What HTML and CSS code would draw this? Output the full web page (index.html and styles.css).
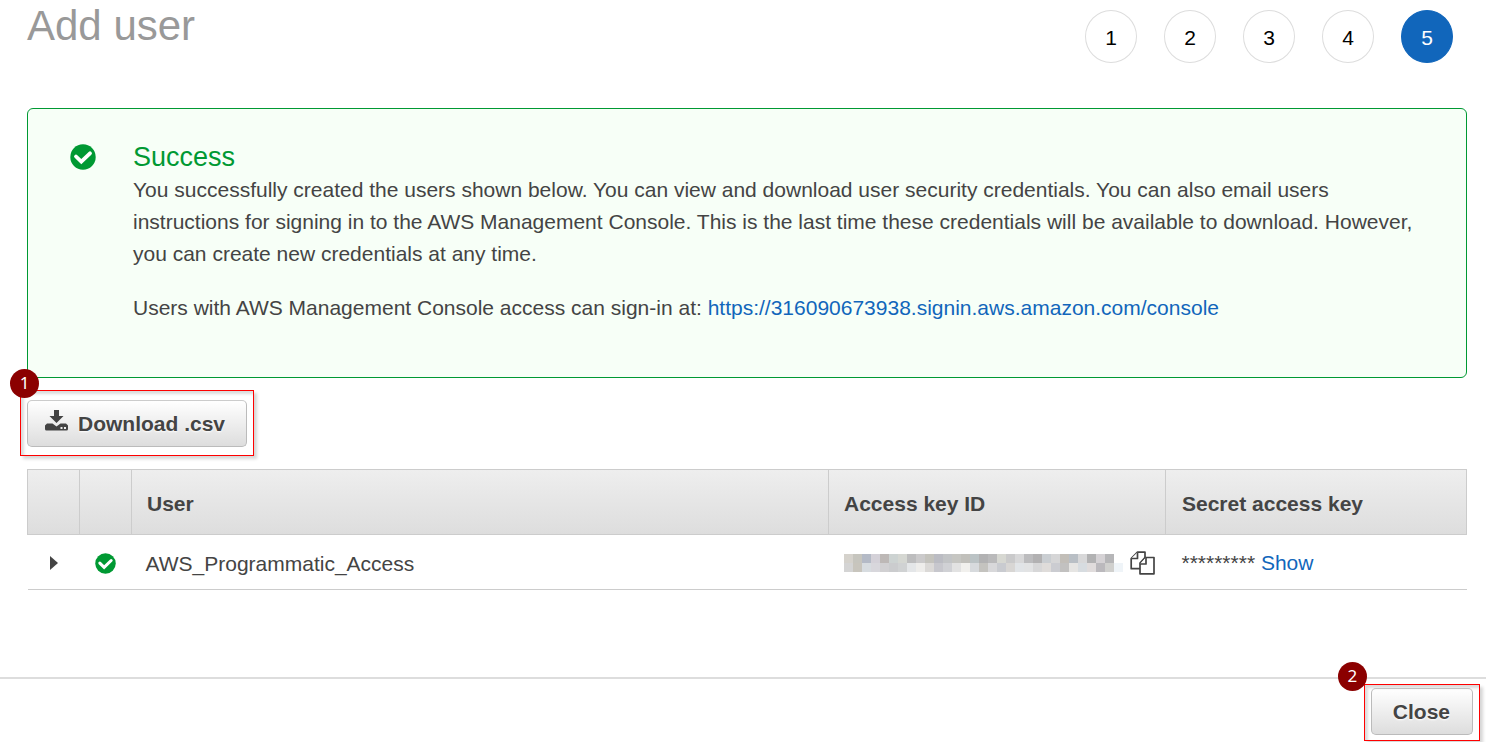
FILE: index.html
```html
<!DOCTYPE html>
<html lang="en">
<head>
<meta charset="utf-8">
<title>Add user</title>
<link rel="stylesheet" href="styles.css">
</head>
<body>
<svg class="defs" aria-hidden="true">
  <symbol id="check" viewBox="0 0 26 26">
    <circle cx="13" cy="13" r="12.7" fill="#093"/>
    <path d="M6 12.500l5.300 5.200 8.700-8.400" fill="none" stroke="#fff" stroke-width="3.800" stroke-linecap="round"/>
  </symbol>
</svg>
<header class="header">
  <h1 class="title">Add user</h1>
  <ol class="steps">
    <li class="step">1</li>
    <li class="step">2</li>
    <li class="step">3</li>
    <li class="step">4</li>
    <li class="step step-current" aria-current="step">5</li>
  </ol>
</header>
<main class="main">
  <section class="alert">
    <svg class="alert-icon"><use href="#check"/></svg>
    <div class="alert-body">
      <h2 class="alert-title">Success</h2>
      <p class="alert-text">You successfully created the users shown below. You can view and download user security credentials. You can also email users instructions for signing in to the AWS Management Console. This is the last time these credentials will be available to download. However, you can create new credentials at any time.</p>
      <p class="alert-text">Users with AWS Management Console access can sign-in at: <a class="link" href="#console">https://316090673938.signin.aws.amazon.com/console</a></p>
    </div>
  </section>
  <div class="callout callout-download">
    <button class="button" type="button">
      <svg class="download-icon" viewBox="0 0 23 21" aria-hidden="true">
        <path d="M9 0h5v6h4.500L11.500 13 4.500 6H9z" fill="#444"/>
        <path d="M2 13.500h5.500l4 3 4-3H21l2 2v3.500q0 1.500-1.500 1.500h-20Q0 20.500 0 19v-3.500z" fill="#444"/>
        <path d="M15.500 17h2v2h-2zM19 17h2v2h-2z" fill="#eee"/>
      </svg>
      Download .csv
    </button>
    <span class="callout-box"></span>
    <span class="callout-number">1</span>
  </div>
  <table class="users">
    <colgroup><col class="col-icon"><col class="col-icon"><col><col class="col-key"><col class="col-secret"></colgroup>
    <thead>
      <tr><th></th><th></th><th>User</th><th>Access key ID</th><th>Secret access key</th></tr>
    </thead>
    <tbody>
      <tr>
        <td class="icon-cell"><button class="icon-button" type="button" aria-label="Expand"><svg class="arrow" viewBox="0 0 8 14"><path d="M0 0l8 7-8 7z" fill="#444"/></svg></button></td>
        <td class="icon-cell"><svg class="row-check"><use href="#check"/></svg></td>
        <td class="name-cell">AWS_Programmatic_Access</td>
        <td>
          <div class="key">
            <svg class="mosaic" viewBox="0 0 279 18" shape-rendering="crispEdges" role="img" aria-label="Hidden key"></svg>
            <button class="icon-button" type="button" aria-label="Copy">
              <svg class="copy-icon" viewBox="0 0 25 24"><g fill="#fff" stroke="#444" stroke-width="1.700" stroke-linejoin="round"><path d="M7.500 1.200H15v16.500H1.200V7.500z"/><path d="M7.500 1.200v6.300H1.200"/><path d="M15 6.500h9v16.300H10V12z"/><path d="M16 6.500v6.500h-6"/></g></svg>
            </button>
          </div>
        </td>
        <td>********* <a class="link" href="#show">Show</a></td>
      </tr>
    </tbody>
  </table>
</main>
<footer class="footer">
  <div class="callout callout-close">
    <button class="button" type="button">Close</button>
    <span class="callout-box"></span>
    <span class="callout-number">2</span>
  </div>
</footer>
<script src="mosaic.js"></script>
</body>
</html>
```
FILE: mosaic.js
```js
const rows = [
  "d5d2cc c6c5be b4bac6 d4d1d8 bdb8b6 cdd3d2 d5d7d2 bdbdbe cbcacb c4c3bd bbbcc3 c2c4c6 c6c6c2 c1c0bb bbc3c5 b2b2b3 bababb d7d8d2 cacacb d8d8d9 bcbcbe b2b1b2 caced2 d6d6d7 c2beb8 b9bfc5 d8d8d9 b2b2b3 d5d2d5 b6b6b8",
  "d4d4d4 c8c5bd d7dce0 d8d7dc d1d0d2 cbccce d0d2d3 e4e6e8 eeedeb dbd9d7 c7c7cd d0d1d5 e2e2e2 f1f0ed d7dadd c4c3bf d8d8da c9cbd0 d8d6d4 e1e4e7 e2e3e4 d7d7d8 dfdcda cbccd1 c2c1c0 e6e5e3 d7dce0 e0dcdc bbb9bd d0d0ce eff4f8"
];
const mosaic = document.querySelector(".mosaic");
rows.forEach((row, y) => row.split(" ").forEach((color, x) => {
  const cell = document.createElementNS("http://www.w3.org/2000/svg", "rect");
  cell.setAttribute("x", x * 9);
  cell.setAttribute("y", y * 9);
  cell.setAttribute("width", 9);
  cell.setAttribute("height", 9);
  cell.setAttribute("fill", "#" + color);
  mosaic.append(cell);
}));
```
FILE: styles.css
```css
* { box-sizing: border-box; }
body {
  margin: 0;
  background: #fff;
  color: #444;
  font-family: "Liberation Sans", Arial, sans-serif;
  font-size: 21px;
  line-height: 32px;
}
.defs { position: absolute; width: 0; height: 0; }
.header {
  display: flex;
  justify-content: space-between;
  align-items: flex-start;
  padding: 0 33px 0 27px;
  height: 108px;
}
.title { margin: 0; padding-top: 1px; font-size: 42px; line-height: 50px; font-weight: 400; color: #999; }
.steps { display: flex; gap: 27px; margin: 0; padding: 10px 0 0; list-style: none; }
.step {
  width: 52px;
  height: 53px;
  border: 1px solid #ddd;
  border-radius: 50%;
  line-height: 53px;
  text-align: center;
  color: #000;
}
.step-current { border-color: #1166bb; background: #1166bb; color: #fff; }
.main { padding: 0 19px 87px 27px; }
.alert {
  display: flex;
  gap: 37px;
  padding: 31px 42px 53px;
  border: 1px solid #093;
  border-radius: 6px;
  background: #f7fff7;
}
.alert-icon { flex: none; width: 26px; height: 26px; margin-top: 4px; }
.alert-title { margin: 0; font-size: 27px; line-height: 34px; font-weight: 400; color: #093; }
.alert-text { margin: 0 0 22px; }
.alert-text:last-child { margin-bottom: 0; }
.link { color: #1166bb; text-decoration: none; }
.callout { position: relative; width: fit-content; }
.callout-download { margin: 22px 0; }
.button {
  display: flex;
  align-items: center;
  gap: 10px;
  height: 47px;
  padding: 0 21px 0 17px;
  border: 1px solid #bbb;
  border-top-color: #ccc;
  border-radius: 5px;
  background: linear-gradient(#fff, #ddd);
  color: #444;
  font: inherit;
  font-weight: 700;
  text-shadow: 0 1px 2px #fff;
}
.callout-close .button { padding: 0 22px 0 21px; }
.download-icon { width: 23px; height: 21px; margin-bottom: 6px; }
.callout-box {
  position: absolute;
  inset: -10px -7px -9px;
  border: 1px solid #f00;
  box-shadow: 3px 3px 3px rgba(0, 0, 0, .16), inset 3px 3px 3px rgba(0, 0, 0, .14);
  pointer-events: none;
}
.callout-close .callout-box { inset: -4px -7px -6px; }
.callout-number {
  position: absolute;
  top: -31px;
  left: -17px;
  width: 29px;
  height: 29px;
  border-radius: 50%;
  background: #8b0000;
  color: #fff;
  font-family: "Noto Sans", sans-serif;
  font-size: 17px;
  line-height: 28px;
  text-align: center;
}
.callout-close .callout-number { top: -26px; left: -33px; }
.users { width: 100%; table-layout: fixed; border-collapse: collapse; }
.col-icon { width: 52px; }
.col-key { width: 337px; }
.col-secret { width: 301px; }
.users thead tr { background: linear-gradient(#eee, #ddd); }
.users th { height: 65px; padding: 3px 15px 0; border: 1px solid #ccc; text-align: left; }
.users td { height: 55px; padding: 2px 15px 0; border-bottom: 1px solid #ccc; }
.users th:last-child, .users td:last-child { padding-left: 16px; }
.users .icon-cell { padding: 2px 0 0; text-align: center; }
.users .name-cell { padding-top: 4px; padding-left: 14px; }
.icon-button { display: inline-flex; padding: 0; border: 0; background: none; }
.arrow { width: 8px; height: 14px; }
.row-check { display: block; width: 21px; height: 21px; margin: 0 auto; }
.key { display: flex; align-items: center; gap: 7px; }
.mosaic { flex: none; width: 279px; height: 18px; }
.copy-icon { width: 25px; height: 24px; }
.footer {
  display: flex;
  justify-content: flex-end;
  padding: 9px 13px 7px;
  border-top: 2px solid #ddd;
}
```
